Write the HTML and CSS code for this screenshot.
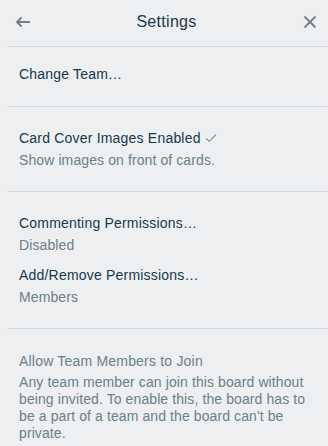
FILE: index.html
```html
<!DOCTYPE html>
<html>
<head>
<meta charset="utf-8">
<link rel="stylesheet" href="styles.css">
</head>
<body>
<div class="panel">
  <header class="header">
    <button class="icon-btn back" aria-label="Back">
      <svg width="16" height="12" viewBox="0 0 16 12"><path d="M15 6H2M6.5 1.5L2 6l4.5 4.5" fill="none" stroke="currentColor" stroke-width="1.8"/></svg>
    </button>
    <h1 class="title">Settings</h1>
    <button class="icon-btn close" aria-label="Close">
      <svg width="14" height="14" viewBox="0 0 14 14"><path d="M1.5 1.5l11 11M12.5 1.5l-11 11" fill="none" stroke="currentColor" stroke-width="1.8"/></svg>
    </button>
  </header>
  <section class="section s1">
    <div class="item-title">Change Team…</div>
  </section>
  <section class="section s2">
    <div class="item-title">Card Cover Images Enabled <svg class="check" width="12" height="10" viewBox="0 0 12 10"><path d="M1 5.5l3.2 3L11 1.5" fill="none" stroke="currentColor" stroke-width="1.2"/></svg></div>
    <div class="item-sub">Show images on front of cards.</div>
  </section>
  <section class="section s3">
    <div class="item-title">Commenting Permissions…</div>
    <div class="item-sub">Disabled</div>
    <div class="item-title second">Add/Remove Permissions…</div>
    <div class="item-sub">Members</div>
  </section>
  <section class="section s4">
    <div class="item-title disabled">Allow Team Members to Join</div>
    <div class="item-desc">Any team member can join this board without being invited. To enable this, the board has to be a part of a team and the board can't be private.</div>
  </section>
</div>
</body>
</html>
```
FILE: styles.css
```css
html, body {
  margin: 0;
  padding: 0;
  background: #edeff0;
}
body {
  font-family: "Liberation Sans", Arial, sans-serif;
  font-size: 14px;
  color: #17394d;
}
.panel {
  padding-left: 7px;
  width: 321px;
}
.header {
  height: 46px;
  display: flex;
  align-items: center;
  justify-content: space-between;
  border-bottom: 1px solid #d6dadc;
}
.title {
  margin: 0;
  font-size: 16px;
  font-weight: 400;
  line-height: 20px;
  letter-spacing: 0.3px;
  color: #17394d;
  flex: 1;
  text-align: center;
  padding-bottom: 2px;
}
.icon-btn {
  background: none;
  border: 0;
  padding: 0;
  color: #6b808c;
  display: flex;
  align-items: center;
  justify-content: center;
  width: 30px;
  height: 30px;
  margin-bottom: 2px;
}
.back { margin-left: 1px; }
.close { margin-right: 3px; }
.section {
  border-bottom: 1px solid #d6dadc;
  padding: 0 12px;
}
.s1 { padding-top: 17px; padding-bottom: 22px; }
.s2 { padding-top: 21px; padding-bottom: 21px; }
.s3 { padding-top: 21px; padding-bottom: 21px; }
.s4 { padding-top: 22px; border-bottom: 0; }
.item-title {
  line-height: 20px;
  letter-spacing: 0.2px;
  color: #17394d;
  display: flex;
  align-items: center;
  gap: 4px;
}
.item-title.second { margin-top: 10px; }
.item-title.disabled { color: #6b808c; }
.check { color: #8a9ba5; margin-top: -1px; }
.item-sub {
  margin-top: 2px;
  line-height: 20px;
  letter-spacing: 0.1px;
  color: #6b808c;
}
.item-desc {
  margin-top: 3px;
  line-height: 17px;
  letter-spacing: 0.1px;
  color: #6b808c;
}
```
